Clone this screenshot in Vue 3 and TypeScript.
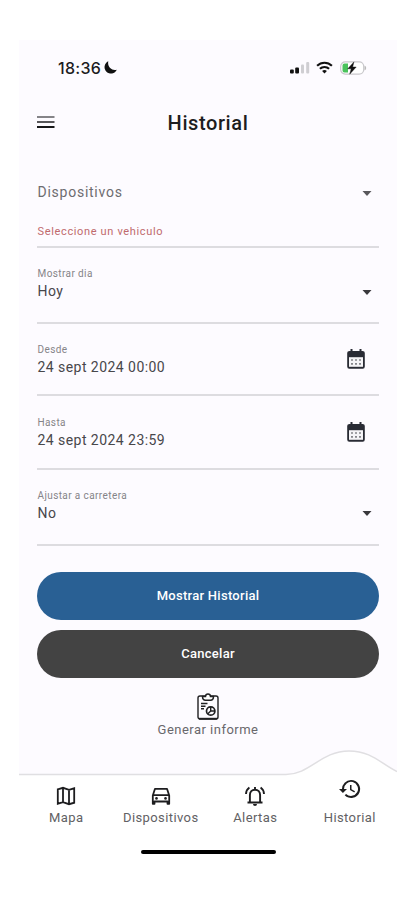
<script setup lang="ts">
interface Field {
  key: string
  label?: string
  value: string
  hint?: string
  kind: 'select' | 'date'
}

const fields: Field[] = [
  { key: 'device', value: 'Dispositivos', hint: 'Seleccione un vehiculo', kind: 'select' },
  { key: 'day', label: 'Mostrar dia', value: 'Hoy', kind: 'select' },
  { key: 'from', label: 'Desde', value: '24 sept 2024 00:00', kind: 'date' },
  { key: 'to', label: 'Hasta', value: '24 sept 2024 23:59', kind: 'date' },
  { key: 'road', label: 'Ajustar a carretera', value: 'No', kind: 'select' },
]
</script>

<template>
  <div class="page">
    <main class="screen">
      <div class="status">
        <div class="clock">
          <span>18:36</span>
          <svg width="13" height="13" viewBox="0 0 13 13"><path d="M4.300.3A6.400 6.400 0 1 0 12.800 8.700C8.500 10.300 3 6.500 4.300.3Z" fill="#111" /></svg>
        </div>
        <div class="signals">
          <svg width="20" height="13" viewBox="0 0 20 13">
            <rect x="0" y="8.5" width="3.8" height="4" rx="1" fill="#111" />
            <rect x="5.2" y="6.5" width="3.8" height="6" rx="1" fill="#111" />
            <rect x="11" y="3.5" width="3" height="9" rx="1" fill="#cfced2" />
            <rect x="16.2" y="1" width="3" height="11.5" rx="1" fill="#cfced2" />
          </svg>
          <svg class="wifi" width="17" height="13" viewBox="0 0 17 13" fill="none" stroke="#111" stroke-width="2.1">
            <path d="M1.1 4.8C5.3.7 11.7.7 15.9 4.8M3.9 7.8c2.6-2.5 6.6-2.5 9.2 0" />
            <path d="M8.5 12.5 6.1 10c1.4-1.3 3.4-1.3 4.8 0Z" fill="#111" stroke="none" />
          </svg>
          <svg class="battery" width="27" height="14" viewBox="0 0 27 14">
            <rect x=".7" y=".9" width="23" height="12.2" rx="4.500" fill="#fff" stroke="#c9c8cc" stroke-width="1.2" />
            <path d="M24.500 4.500c2.200.7 2.200 4.300 0 5Z" fill="#bbb" />
            <path d="M4.500 2.500H8v9H4.500A2 2 0 0 1 2.500 9.500v-5A2 2 0 0 1 4.500 2.500Z" fill="#49c25b" />
            <path d="M13.900.9 7.700 7.800h3.500L9.700 13.200l6.500-7.200h-3.500Z" fill="#111" stroke="#111" stroke-width=".4" />
          </svg>
        </div>
      </div>

      <header class="header">
        <svg class="menu" width="18" height="13" viewBox="0 0 18 13">
          <rect y="0" width="17.500" height="2" fill="#858488" />
          <rect y="5" width="17.500" height="2" fill="#58575a" />
          <rect y="10" width="17.500" height="2" fill="#161618" />
        </svg>
        <h1>Historial</h1>
      </header>

      <form class="form" @submit.prevent>
        <div v-for="f in fields" :key="f.key" class="field" :class="[f.key, f.kind]">
          <div class="copy">
            <span v-if="f.label" class="label">{{ f.label }}</span>
            <span class="value">{{ f.value }}</span>
            <span v-if="f.hint" class="hint">{{ f.hint }}</span>
          </div>
          <svg v-if="f.kind === 'select'" class="caret" width="10" height="5" viewBox="0 0 10 5"><path d="M.5 0h9L5 5Z" fill="currentColor" /></svg>
          <svg v-else class="calendar" width="18" height="20" viewBox="0 0 18 20">
            <path d="M3.500 0h2v2h7V0h2v2h1A2.300 2.300 0 0 1 17.800 4.500v13a2.200 2.200 0 0 1-2.300 2.200h-13A2.200 2.200 0 0 1 .2 17.500v-13A2.300 2.300 0 0 1 2.500 2h1Z" fill="#292b34" />
            <path d="M2 8.200h14v9.600H2Z" fill="#f5f4f7" />
            <path d="M4 11h10M4 14.800h10" stroke="#85858b" stroke-width="1.700" stroke-dasharray="2 2" />
          </svg>
        </div>

        <button class="primary" type="submit">Mostrar Historial</button>
        <button class="secondary" type="button">Cancelar</button>
      </form>

      <div class="report">
        <svg width="22" height="27" viewBox="0 0 22 27" fill="none" stroke="#202022" stroke-width="1.400">
          <rect x="1" y="3" width="20" height="23" rx="2" />
          <path d="M2 25.700h18" stroke-width="1.800" />
          <path d="M5.500 3.500h3C8.700 0 13.300 0 13.500 3.500h3c0 2.300-1.300 3.700-3 3.700h-5c-1.700 0-3-1.400-3-3.700Z" fill="#fff" stroke-width="1.500" />
          <path d="M4 10.500h6.500M4 13.200h4.500M4 15.700h3" />
          <circle cx="13.700" cy="18" r="4.200" stroke-width="1.700" />
          <path d="M13.700 14v4h4M13.700 18l-2.800 2.700" />
        </svg>
        <span>Generar informe</span>
      </div>
    </main>

    <nav class="nav">
      <svg class="curve" width="378" height="28" viewBox="0 0 378 28">
        <path d="M0 25.500H267C291 25.500 302 2 330 2C353 2 362 15 378 22.500V28H0Z" fill="#fff" />
        <path d="M0 25.500H267C291 25.500 302 2 330 2C353 2 362 15 378 22.500" fill="none" stroke="#e0dfe2" stroke-width="1.500" />
      </svg>
      <div class="tabs">
        <a class="tab">
          <svg width="24" height="24" viewBox="0 0 24 24" fill="none" stroke="#1d1d1f" stroke-width="1.800">
            <path d="M3.800 5.300 9 3.800l6 2 5.200-1.500v14.400L15 20.200l-6-2-5.200 1.500ZM9 3.800v14.400M15 5.800v14.400" />
          </svg>
          <span>Mapa</span>
        </a>
        <a class="tab">
          <svg width="24" height="24" viewBox="0 0 24 24" fill="none" stroke="#1d1d1f" stroke-width="1.800">
            <path d="M3.800 11.500 6 4.800h12l2.200 6.700v8.300h-1.700v-2.300h-13v2.300H3.800ZM3.800 11.200h16.400" stroke-linejoin="round" />
            <circle cx="7.500" cy="14.400" r="1.300" fill="#1d1d1f" stroke="none" />
            <circle cx="16.500" cy="14.400" r="1.300" fill="#1d1d1f" stroke="none" />
          </svg>
          <span>Dispositivos</span>
        </a>
        <a class="tab">
          <svg width="24" height="24" viewBox="0 0 24 24" fill="none" stroke="#1d1d1f" stroke-width="1.900">
            <path d="M4.500 18.500h15M6.900 18V11c0-3 2-5.300 5.100-5.300s5.100 2.300 5.100 5.300v7M12 3v3M3 10c.1-2.700 1.300-4.900 3.400-6.400M21 10c-.1-2.700-1.300-4.900-3.400-6.400" />
            <path d="M10 20h4a2 2 0 0 1-4 0Z" fill="#1d1d1f" stroke="none" />
          </svg>
          <span>Alertas</span>
        </a>
        <a class="tab active">
          <svg width="24" height="24" viewBox="0 0 24 24" fill="#1d1d1f">
            <path d="M13 3a9 9 0 0 0-9 9H1l3.900 3.900L9 12H6a7 7 0 1 1 2.100 4.900l-1.400 1.400A9 9 0 1 0 13 3Zm-1 5v5l4.300 2.500.7-1.200-3.500-2.100V8Z" />
          </svg>
          <span>Historial</span>
        </a>
      </div>
      <div class="home"></div>
    </nav>
  </div>
</template>

<style>
body { margin: 0; background: #fff; }
</style>

<style scoped>
.page { box-sizing: border-box; height: 900px; padding: 40px 18px 0 19px; overflow: hidden; background: #fff; font-family: Roboto, sans-serif; color: #48474b; }
.screen { height: 734px; background: #fdfbff; }
.status { display: flex; justify-content: space-between; align-items: center; height: 55px; padding: 0 30px 0 39px; }
.clock { display: flex; align-items: center; gap: 3px; color: #1c1c1e; font: 500 16px/20px Inter, sans-serif; letter-spacing: .3px; }
.signals { display: flex; align-items: center; }
.wifi { margin-left: 6px; }
.battery { margin-left: 7px; }
.header { display: grid; grid-template-columns: 18px 1fr 18px; align-items: center; height: 55px; padding: 0 18px; }
h1 { margin: 0; text-align: center; color: #1d1d20; font-size: 20px; line-height: 26px; font-weight: 500; letter-spacing: .6px; }
.form { display: flex; flex-direction: column; padding: 15px 18px 0; }
.field { display: flex; justify-content: space-between; box-sizing: border-box; border-bottom: 2px solid #dddce0; }
.copy { display: flex; flex-direction: column; padding-left: .5px; }
.device { height: 83px; padding-top: 18px; }
.day { height: 76px; padding-top: 18px; }
.from { height: 72px; padding-top: 18px; }
.to { height: 74px; padding-top: 19px; }
.road { height: 76px; padding-top: 18px; }
.label { height: 16px; font-size: 10px; line-height: 15px; letter-spacing: .4px; color: #858488; }
.day .label { height: 16px; }
.value { font-size: 14px; line-height: 18px; letter-spacing: .45px; }
.device .value { color: #6d6c70; letter-spacing: .75px; }
.hint { margin-top: 22px; font-size: 11px; line-height: 18px; letter-spacing: .65px; color: #c06a6d; }
.caret { margin: 24px 7px 0 0; color: #39383c; }
.road .caret { margin-top: 23px; }
.device .caret { margin-top: 8px; color: #59585c; }
.calendar { margin: 7px 14px 0 0; }
button { height: 48px; border: 0; border-radius: 24px; color: #fff; font: 500 13px/18px Roboto, sans-serif; letter-spacing: .28px; }
.primary { margin-top: 26px; background: #296094; }
.secondary { margin-top: 10px; background: #434343; }
.report { display: flex; flex-direction: column; align-items: center; padding-top: 15px; color: #69686c; font-size: 13px; line-height: 18px; letter-spacing: .48px; }
.report span { margin-top: 1px; }
.nav { position: relative; background: #fff; }
.curve { position: absolute; top: -25px; left: 0; }
.tabs { position: relative; display: grid; grid-template-columns: repeat(4, 1fr); padding-top: 10px; }
.tab { display: flex; flex-direction: column; align-items: center; color: #626164; font-size: 13px; line-height: 18px; letter-spacing: .4px; white-space: nowrap; }
.tab span { margin-top: 1px; }
.active svg { margin-top: -7px; margin-bottom: 7px; }
.home { width: 135px; height: 4px; margin: 23px auto 0; border-radius: 2px; background: #000; }
</style>
